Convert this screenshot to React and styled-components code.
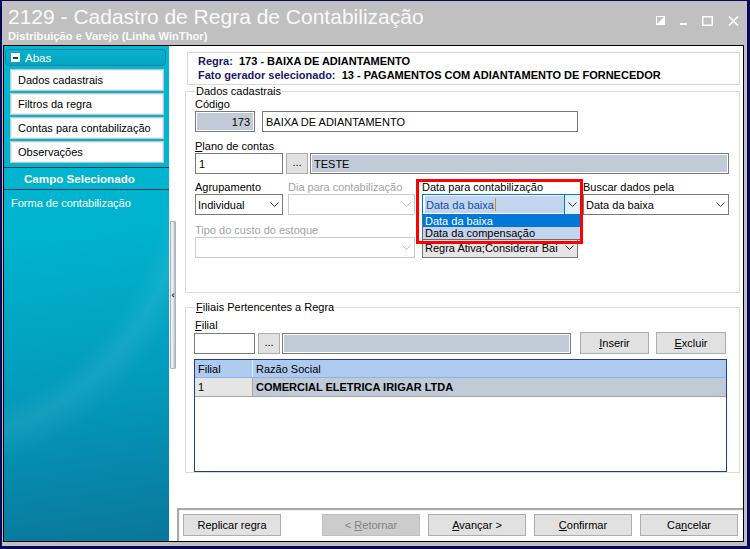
import React from 'react';
import styled, { createGlobalStyle } from 'styled-components';

const GlobalStyle = createGlobalStyle`
  html, body {
    margin: 0;
    padding: 0;
  }
  body {
    font-family: "Liberation Sans", Arial, sans-serif;
    font-size: 11px;
    color: #000;
  }
  * {
    box-sizing: border-box;
  }
`;

const Window = styled.div`
  width: 750px;
  height: 549px;
  background: #08085a;
  padding: 1px 3px 3px 2px;
  display: flex;
`;

const Frame = styled.div`
  flex: 1;
  display: flex;
  flex-direction: column;
  background: #c0c0c0;
  padding: 0 3px 4px 1px;
`;

const TitleBar = styled.div`
  height: 44px;
  display: flex;
  align-items: flex-start;
  justify-content: space-between;
`;

const TitleTexts = styled.div`
  padding: 3px 0 0 5px;
  color: #fafafa;
`;

const TitleMain = styled.div`
  font-size: 21px;
  line-height: 25px;
`;

const TitleSub = styled.div`
  font-size: 11.2px;
  font-weight: bold;
  line-height: 13px;
  margin-top: 1px;
`;

const WinControls = styled.div`
  display: flex;
  align-items: flex-end;
  gap: 15px;
  padding: 7px 5px 0 0;
  height: 18px;
  box-sizing: content-box;
`;

const Client = styled.div`
  flex: 1;
  display: flex;
  border: 1px solid #000;
  background: #fff;
  min-height: 0;
`;

const LeftPanel = styled.div`
  width: 165px;
  display: flex;
  flex-direction: column;
  background:
    radial-gradient(ellipse 420px 520px at -60px 80px, rgba(255,255,255,0.0) 55%, rgba(255,255,255,0.07) 60%, rgba(255,255,255,0) 66%),
    linear-gradient(172deg, #02b7d2 0%, #00b3cf 38%, #0399bb 70%, #0a769b 100%);
  padding-top: 3px;
`;

const AbasHeader = styled.div`
  height: 17px;
  margin: 0 3px 0 1px;
  border: 1px solid #0a87a6;
  border-radius: 4px;
  background: linear-gradient(#0bb0cd, #05a3c2);
  display: flex;
  align-items: center;
  gap: 5px;
  padding-left: 5px;
  color: #fff;
  font-size: 11.5px;
`;

const MinusBox = styled.span`
  width: 9px;
  height: 9px;
  background: #fff;
  display: flex;
  align-items: center;
  justify-content: center;
  &::after {
    content: '';
    width: 5px;
    height: 2px;
    background: #0a4a66;
  }
`;

const TabList = styled.div`
  display: flex;
  flex-direction: column;
  gap: 2px;
  padding: 3px 5px 0 6px;
`;

const TabItem = styled.div`
  height: 22px;
  background: #fff;
  border: 1px solid #c6c6c6;
  box-shadow: inset 0 0 0 1px #ececec;
  display: flex;
  align-items: center;
  padding-left: 7px;
  font-size: 11px;
`;

const SectionTitle = styled.div`
  margin-top: 4px;
  height: 23px;
  border-top: 1px solid #123c52;
  border-bottom: 1px solid #123c52;
  color: #fff;
  font-weight: bold;
  font-size: 11.6px;
  display: flex;
  align-items: center;
  padding-left: 20px;
`;

const SideField = styled.div`
  color: #fff;
  font-size: 11px;
  padding: 7px 0 0 7px;
`;

const RightCol = styled.div`
  flex: 1;
  display: flex;
  flex-direction: column;
`;

const Body = styled.div`
  flex: 1;
  display: flex;
`;

const Splitter = styled.div`
  width: 8px;
  padding: 175px 1px 0 1px;
`;

const SplitterBar = styled.div`
  height: 148px;
  background: linear-gradient(90deg, #f4f6f8, #dfe4ea 60%, #a9b4c2);
  border: 1px solid #aab2bd;
  border-radius: 1px;
  display: flex;
  align-items: center;
  justify-content: center;
  font-size: 9px;
  font-weight: bold;
  color: #111;
`;

const Content = styled.div`
  flex: 1;
  padding: 6px 3px 0 8px;
  display: flex;
  flex-direction: column;
`;

const InfoBox = styled.div`
  height: 33px;
  margin: 0 0 0 2px;
  border: 1px solid #d8d8d8;
  padding: 1px 10px;
  font-weight: bold;
  font-size: 11px;
`;

const InfoLine = styled.div`
  line-height: 14px;
  white-space: pre;
`;

const InfoLabel = styled.span`
  color: #17176a;
`;

const GroupBox = styled.fieldset`
  margin: ${(p) => p.$top || 0}px 0 0 0;
  border: 1px solid #dadada;
  padding: 0 9px ${(p) => p.$bottom || 0}px 9px;
  min-width: 0;
`;

const Legend = styled.legend`
  padding: 0 1px;
  margin-left: 0;
  line-height: 13px;
  font-size: 11px;
`;

const Row = styled.div`
  display: flex;
  align-items: flex-start;
  margin-top: ${(p) => p.$mt || 0}px;
  margin-left: ${(p) => p.$ml || 0}px;
`;

const Field = styled.div`
  width: ${(p) => p.$w}px;
  margin-left: ${(p) => p.$ml || 0}px;
  position: relative;
`;

const Label = styled.div`
  height: 13px;
  line-height: 13px;
  font-size: 11px;
  white-space: nowrap;
  color: ${(p) => (p.$disabled ? '#a3a3a3' : '#000')};
`;

const InputRow = styled.div`
  display: flex;
  align-items: center;
  margin-top: ${(p) => p.$mt || 0}px;
`;

const TextBox = styled.div`
  width: ${(p) => p.$w}px;
  margin-left: ${(p) => p.$ml || 0}px;
  height: 21px;
  border: 1px solid #7a7a7a;
  background: ${(p) => (p.$tone === 'blue' ? '#c0cbd7' : '#fff')};
  box-shadow: ${(p) => (p.$tone === 'blue' ? 'inset 0 0 0 1px #fff' : 'none')};
  display: flex;
  align-items: center;
  justify-content: ${(p) => (p.$right ? 'flex-end' : 'flex-start')};
  padding: 0 4px 0 3px;
  font-size: 11px;
  white-space: nowrap;
  overflow: hidden;
`;

const DotsButton = styled.div`
  width: 22px;
  height: 21px;
  margin-left: ${(p) => p.$ml || 0}px;
  background: #e1e1e1;
  border: 1px solid #adadad;
  display: flex;
  align-items: center;
  justify-content: center;
  font-size: 11px;
  padding-bottom: 3px;
`;

const Select = styled.div`
  height: 21px;
  display: flex;
  align-items: stretch;
  border: 1px solid
    ${(p) => (p.$focused ? '#0078d7' : p.$disabled ? '#cccccc' : '#7a7a7a')};
  background: ${(p) => (p.$gray ? '#e5e5e5' : '#fff')};
  font-size: 11px;
  color: ${(p) => (p.$disabled ? '#a0a0a0' : '#000')};
  overflow: hidden;
`;

const SelectValue = styled.div`
  flex: 1;
  display: flex;
  align-items: center;
  padding-left: 2px;
  white-space: nowrap;
  overflow: hidden;
`;

const Highlight = styled.span`
  flex: 1;
  align-self: stretch;
  margin: 1px 0 1px 0;
  display: flex;
  align-items: center;
  padding-left: 1px;
  background: #c3d4ee;
  color: #0a4fae;
  &::after {
    content: '';
    width: 1px;
    height: 13px;
    margin-left: 1px;
    background: #e8821e;
  }
  & > span {
    flex: 0 0 auto;
  }
`;

const ChevronBox = styled.div`
  width: 16px;
  display: flex;
  align-items: center;
  justify-content: center;
  background: ${(p) => (p.$focused ? '#e3effa' : 'transparent')};
  border-left: ${(p) => (p.$focused ? '1px solid #0078d7' : 'none')};
`;

const DropList = styled.div`
  position: absolute;
  top: 100%;
  left: 0;
  width: 100%;
  z-index: 2;
  border: 1px solid #6a6a6a;
  border-top: none;
  background: #c6d3ec;
  font-size: 11px;
`;

const DropItem = styled.div`
  height: 12px;
  line-height: 12px;
  padding-left: 2px;
  background: ${(p) => (p.$selected ? '#0078d7' : '#c6d3ec')};
  color: ${(p) => (p.$selected ? '#fff' : '#000')};
  white-space: nowrap;
`;

const RedFrame = styled.div`
  position: absolute;
  top: -2px;
  left: -6px;
  width: 167px;
  height: 65px;
  border: 3px solid #ff0000;
  z-index: 3;
  pointer-events: none;
`;

const Grid = styled.div`
  margin: 5px 0 0 -1px;
  width: 533px;
  height: 113px;
  border: 1px solid #1a3d9c;
  background: #fff;
`;

const GridHeader = styled.div`
  display: flex;
  height: 18px;
  background: #aecaef;
  border-bottom: 1px solid #8fb0e0;
`;

const GridRow = styled.div`
  display: flex;
  height: 19px;
  border-bottom: 1px solid #a6a6a6;
`;

const GridCell = styled.div`
  width: ${(p) => (p.$w ? `${p.$w}px` : 'auto')};
  flex: ${(p) => (p.$w ? '0 0 auto' : '1')};
  display: flex;
  align-items: center;
  padding-left: 3px;
  font-size: 11px;
  font-weight: ${(p) => (p.$bold ? 'bold' : 'normal')};
  background: ${(p) => p.$bg || 'transparent'};
  border-right: ${(p) => (p.$divider ? `1px solid ${p.$divider}` : 'none')};
  white-space: nowrap;
`;

const BottomBar = styled.div`
  height: 33px;
  margin-left: 8px;
  border: 2px solid #a8a8a8;
  border-right: none;
  border-bottom: none;
  box-shadow: inset 1px 1px 0 #f4f4f4;
  display: flex;
  align-items: flex-start;
  gap: 8px;
  padding: 4px 0 0 4px;
`;

const Button = styled.div`
  width: ${(p) => p.$w || 98}px;
  height: 22px;
  margin-left: ${(p) => p.$ml || 0}px;
  background: ${(p) => (p.$disabled ? '#cccccc' : '#e1e1e1')};
  border: 1px solid ${(p) => (p.$disabled ? '#bfbfbf' : '#adadad')};
  color: ${(p) => (p.$disabled ? '#838383' : '#000')};
  display: flex;
  align-items: center;
  justify-content: center;
  font-size: 11px;
  flex: 0 0 auto;
  white-space: pre;
`;

const Chevron = ({ color = '#333' }) => (
  <svg width="9" height="5" viewBox="0 0 9 5">
    <polyline points="0.5,0.5 4.5,4.5 8.5,0.5" fill="none" stroke={color} strokeWidth="1" />
  </svg>
);

function ComboBox({ value, disabled, gray }) {
  return (
    <Select $disabled={disabled} $gray={gray}>
      <SelectValue>{value}</SelectValue>
      <ChevronBox>
        <Chevron color={disabled ? '#bdbdbd' : '#333'} />
      </ChevronBox>
    </Select>
  );
}

function WindowIcons() {
  return (
    <WinControls>
      <svg width="9" height="9" viewBox="0 0 9 9" style={{ marginBottom: 1 }}>
        <rect x="0.5" y="0.5" width="8" height="8" fill="none" stroke="#fff" />
        <polygon points="0,9 9,0 9,9" fill="#fff" />
      </svg>
      <svg width="7" height="2" viewBox="0 0 7 2" style={{ marginBottom: 1 }}>
        <rect x="0" y="0" width="7" height="2" fill="#fff" />
      </svg>
      <svg width="11" height="10" viewBox="0 0 11 10">
        <rect x="0.75" y="0.75" width="9.5" height="8.5" fill="none" stroke="#fff" strokeWidth="1.5" />
      </svg>
      <svg width="11" height="10" viewBox="0 0 11 10">
        <path d="M1 0.5 L10 9.5 M10 0.5 L1 9.5" stroke="#fff" strokeWidth="1.6" />
      </svg>
    </WinControls>
  );
}

export default function App() {
  return (
    <>
      <GlobalStyle />
      <Window>
        <Frame>
          <TitleBar>
            <TitleTexts>
              <TitleMain>2129 - Cadastro de Regra de Contabilização</TitleMain>
              <TitleSub>Distribuição e Varejo (Linha WinThor)</TitleSub>
            </TitleTexts>
            <WindowIcons />
          </TitleBar>

          <Client>
            <LeftPanel>
              <AbasHeader>
                <MinusBox />
                Abas
              </AbasHeader>
              <TabList>
                <TabItem>Dados cadastrais</TabItem>
                <TabItem>Filtros da regra</TabItem>
                <TabItem>Contas para contabilização</TabItem>
                <TabItem>Observações</TabItem>
              </TabList>
              <SectionTitle>Campo Selecionado</SectionTitle>
              <SideField>Forma de contabilização</SideField>
            </LeftPanel>

            <RightCol>
              <Body>
                <Splitter>
                  <SplitterBar>&lsaquo;</SplitterBar>
                </Splitter>

                <Content>
                  <InfoBox>
                    <InfoLine>
                      <InfoLabel>Regra:  </InfoLabel>173 - BAIXA DE ADIANTAMENTO
                    </InfoLine>
                    <InfoLine>
                      <InfoLabel>Fato gerador selecionado:  </InfoLabel>13 - PAGAMENTOS COM ADIANTAMENTO DE FORNECEDOR
                    </InfoLine>
                  </InfoBox>

                  <GroupBox $bottom={34}>
                    <Legend>Dados cadastrais</Legend>
                    <Label>Código</Label>
                    <InputRow>
                      <TextBox $w={60} $tone="blue" $right>173</TextBox>
                      <TextBox $w={316} $ml={7}>BAIXA DE ADIANTAMENTO</TextBox>
                    </InputRow>

                    <Label style={{ marginTop: 8 }}>
                      <u>P</u>lano de contas
                    </Label>
                    <InputRow>
                      <TextBox $w={88}>1</TextBox>
                      <DotsButton $ml={3}>...</DotsButton>
                      <TextBox $w={419} $ml={2} $tone="blue">TESTE</TextBox>
                    </InputRow>

                    <Row $mt={7}>
                      <Field $w={88}>
                        <Label>Agrupamento</Label>
                        <ComboBox value="Individual" />
                      </Field>
                      <Field $w={127} $ml={5}>
                        <Label $disabled>Dia para contabilização</Label>
                        <ComboBox value="" disabled />
                      </Field>
                      <Field $w={159} $ml={7}>
                        <Label>Data para contabilização</Label>
                        <Select $focused>
                          <SelectValue>
                            <Highlight>
                              <span>Data da baixa</span>
                            </Highlight>
                          </SelectValue>
                          <ChevronBox $focused>
                            <Chevron />
                          </ChevronBox>
                        </Select>
                        <DropList>
                          <DropItem $selected>Data da baixa</DropItem>
                          <DropItem>Data da compensação</DropItem>
                        </DropList>
                        <RedFrame />
                      </Field>
                      <Field $w={146} $ml={2}>
                        <Label>Buscar dados pela</Label>
                        <ComboBox value="Data da baixa" />
                      </Field>
                    </Row>

                    <Row $mt={9}>
                      <Field $w={220}>
                        <Label $disabled>Tipo do custo do estoque</Label>
                        <ComboBox value="" disabled />
                      </Field>
                      <Field $w={156} $ml={7}>
                        <Label />
                        <ComboBox value="Regra Ativa;Considerar Bai" gray />
                      </Field>
                    </Row>
                  </GroupBox>

                  <GroupBox $top={8}>
                    <Legend>
                      <u>F</u>iliais Pertencentes a Regra
                    </Legend>
                    <Label style={{ marginTop: 5 }}>
                      <u>F</u>ilial
                    </Label>
                    <Row $ml={-1} style={{ alignItems: 'center', height: 22 }}>
                      <TextBox $w={61} />
                      <DotsButton $ml={3}>...</DotsButton>
                      <TextBox $w={289} $ml={2} $tone="blue" />
                      <Button $w={69} $ml={9}>
                        <span><u>I</u>nserir</span>
                      </Button>
                      <Button $w={70} $ml={7}>
                        <span><u>E</u>xcluir</span>
                      </Button>
                    </Row>
                    <Grid>
                      <GridHeader>
                        <GridCell $w={58} $divider="#e4eefc">Filial</GridCell>
                        <GridCell>Razão Social</GridCell>
                      </GridHeader>
                      <GridRow>
                        <GridCell $w={58} $bg="#e5e5e5" $divider="#a6a6a6">1</GridCell>
                        <GridCell $bg="#c0cbd7" $bold>COMERCIAL ELETRICA IRIGAR LTDA</GridCell>
                      </GridRow>
                    </Grid>
                  </GroupBox>
                </Content>
              </Body>

              <BottomBar>
                <Button>Replicar regra</Button>
                <Button $disabled $ml={33}>
                  <span>&lt; <u>R</u>etornar</span>
                </Button>
                <Button>
                  <span><u>A</u>vançar &gt;</span>
                </Button>
                <Button>
                  <span><u>C</u>onfirmar</span>
                </Button>
                <Button>
                  <span>Ca<u>n</u>celar</span>
                </Button>
              </BottomBar>
            </RightCol>
          </Client>
        </Frame>
      </Window>
    </>
  );
}
